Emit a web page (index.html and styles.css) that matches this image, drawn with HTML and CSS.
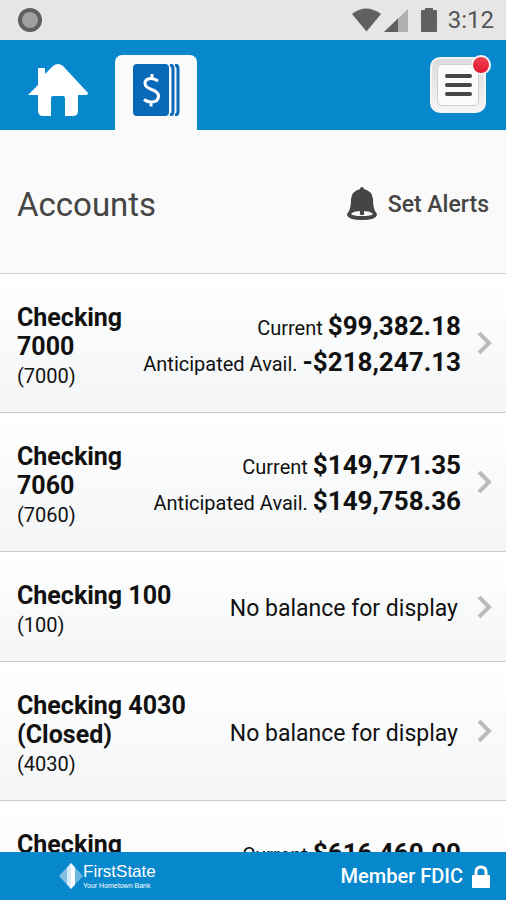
FILE: index.html
```html
<!DOCTYPE html>
<html lang="en">
<head>
    <meta charset="UTF-8">
    <meta name="viewport" content="width=device-width, initial-scale=1.0">
    <title>Accounts</title>
    <link rel="stylesheet" href="styles.css">
</head>
<body>
    <div class="status-bar">
        <span class="recorder"></span>
        <div class="status-icons">
            <svg width="30" height="24" viewBox="0 0 30 24"><path d="M0 6Q14 -5 29 6L14.500 23.500Z" fill="#606060"/></svg>
            <svg width="24" height="24" viewBox="0 0 24 24"><path d="M0 24L24 1V24Z" fill="#b0b0b0"/><path d="M0 24L14 10.500V24Z" fill="#606060"/></svg>
            <svg class="battery" width="16" height="24" viewBox="0 0 16 24"><path d="M4 0H12V2H15Q16 2 16 3V23Q16 24 15 24H1Q0 24 0 23V3Q0 2 1 2H4Z" fill="#606060"/></svg>
            <span class="clock">3:12</span>
        </div>
    </div>

    <header class="nav">
        <a href="#" class="home" aria-label="Home">
            <svg width="60" height="54" viewBox="0 0 60 54"><path d="M0 31L10 21V5Q10 4 11 4H16Q17 4 17 5V10L25 2Q30 -2 35 2L60 29Q60 31 58 31H50V47Q50 52 45 52H37V34Q37 32 35 32H25Q23 32 23 34V52H15Q10 52 10 46V31Z" fill="#fff"/></svg>
        </a>
        <a href="#" class="tab" aria-label="Accounts">
            <svg width="48" height="52" viewBox="0 0 48 52">
                <rect x="1" y="0" width="36" height="52" rx="4" fill="#0869b9"/>
                <path d="M38 1Q41 1 41 5V47Q41 51 38 51M43 1Q46 1 46 5V47Q46 51 43 51" fill="none" stroke="#0869b9" stroke-width="3"/>
                <path d="M26 17Q22.500 14.500 19 14.500Q13 14.500 13 19.500Q13 23 19.500 25.500Q26.500 28 26.500 32Q26.500 38 19 38Q15 38 12 35.500M20 10V15M19 38V42.500" fill="none" stroke="#fff" stroke-width="3"/>
            </svg>
        </a>
        <button class="menu-button" aria-label="Menu">
            <span class="menu-face"><span></span><span></span><span></span></span>
            <span class="badge"></span>
        </button>
    </header>

    <main>
        <div class="title-bar">
            <h1>Accounts</h1>
            <a href="#" class="alerts">
                <svg width="30" height="34" viewBox="0 0 30 34"><path d="M15 0Q17 0 17 2Q25 4 26 12Q26 20 28 24Q30 26 30 28Q29 33 15 33Q1 33 0 28Q0 26 2 24Q4 20 4 12Q5 4 13 2Q13 0 15 0Z" fill="#454545"/><path d="M4 27Q6 24 15 24Q24 24 26 27Q24 29 15 29Q6 29 4 27Z" fill="#fafafa"/><path d="M13 23H17V26Q18 28 15 28Q12 28 13 26Z" fill="#454545"/></svg>
                Set Alerts
            </a>
        </div>

        <ul class="accounts">
            <li><a href="#" class="account">
                <div class="info"><div class="name">Checking 7000</div><div class="number">(7000)</div></div>
                <div class="balances">
                    <div>Current <b>$99,382.18</b></div>
                    <div>Anticipated Avail. <b>-$218,247.13</b></div>
                </div>
                <svg class="chevron" width="15" height="22" viewBox="0 0 15 22"><path d="M2 1L12 11L2 21"/></svg>
            </a></li>
            <li><a href="#" class="account">
                <div class="info"><div class="name">Checking 7060</div><div class="number">(7060)</div></div>
                <div class="balances">
                    <div>Current <b>$149,771.35</b></div>
                    <div>Anticipated Avail. <b>$149,758.36</b></div>
                </div>
                <svg class="chevron" width="15" height="22" viewBox="0 0 15 22"><path d="M2 1L12 11L2 21"/></svg>
            </a></li>
            <li><a href="#" class="account">
                <div class="info"><div class="name">Checking 100</div><div class="number">(100)</div></div>
                <div class="no-balance">No balance for display</div>
                <svg class="chevron" width="15" height="22" viewBox="0 0 15 22"><path d="M2 1L12 11L2 21"/></svg>
            </a></li>
            <li><a href="#" class="account">
                <div class="info"><div class="name">Checking 4030 (Closed)</div><div class="number">(4030)</div></div>
                <div class="no-balance">No balance for display</div>
                <svg class="chevron" width="15" height="22" viewBox="0 0 15 22"><path d="M2 1L12 11L2 21"/></svg>
            </a></li>
            <li><a href="#" class="account">
                <div class="info"><div class="name">Checking 7080</div><div class="number">(7080)</div></div>
                <div class="balances">
                    <div>Current <b>$616,460.00</b></div>
                    <div>Anticipated Avail. <b>$616,460.00</b></div>
                </div>
                <svg class="chevron" width="15" height="22" viewBox="0 0 15 22"><path d="M2 1L12 11L2 21"/></svg>
            </a></li>
        </ul>
    </main>

    <footer>
        <div class="logo">
            <svg width="24" height="26" viewBox="0 0 24 26"><path d="M12 0V26L0 13Z" fill="#84c0e5"/><path d="M12 0V26L8 21.500V4.500Z" fill="#d4eaf7"/><path d="M12 0L24 13L12 26Z" fill="#6cb5df"/><path d="M12 0L16 4.500V21.500L12 26Z" fill="#fff"/></svg>
            <div class="logo-text">
                <div class="bank">FirstState</div>
                <div class="slogan">Your Hometown Bank</div>
            </div>
        </div>
        <div class="fdic">
            Member FDIC
            <svg width="18" height="23" viewBox="0 0 18 23"><path d="M4 12V7Q4 2 9 2Q14 2 14 7V12" fill="none" stroke="#fff" stroke-width="3"/><rect x="0" y="10" width="18" height="13" rx="1" fill="#fff"/></svg>
        </div>
    </footer>
</body>
</html>
```
FILE: styles.css
```css
* {
    box-sizing: border-box;
}
body {
    display: flex;
    flex-direction: column;
    height: 100vh;
    margin: 0;
    background-color: #fafafa;
    font-family: Roboto, Arial, sans-serif;
    color: #111;
}
a {
    color: inherit;
    text-decoration: none;
}
svg {
    display: block;
    flex-shrink: 0;
}
.status-bar {
    display: flex;
    flex-shrink: 0;
    align-items: center;
    justify-content: space-between;
    height: 40px;
    padding: 0 12px 0 18px;
    background-color: #e6e6e6;
}
.recorder {
    width: 24px;
    height: 24px;
    border: 4px solid #606060;
    border-radius: 50%;
    background-color: #a0a0a0;
}
.status-icons {
    display: flex;
    align-items: center;
    gap: 2px;
}
.battery {
    margin: 0 9px 0 11px;
}
.clock {
    font-size: 24px;
    line-height: 24px;
    color: #555;
}
.nav {
    display: flex;
    flex-shrink: 0;
    align-items: flex-end;
    height: 90px;
    padding: 0 20px 0 28px;
    background-color: #0888cc;
}
.home {
    margin-bottom: 12px;
}
.tab {
    display: flex;
    justify-content: center;
    width: 82px;
    height: 75px;
    margin-left: 27px;
    padding-top: 9px;
    border-radius: 7px 7px 0 0;
    background-color: #fafafa;
}
.menu-button {
    position: relative;
    width: 56px;
    height: 56px;
    margin: 0 0 17px auto;
    padding: 5px;
    border: 2px solid #f5f5f5;
    border-radius: 10px;
    background: linear-gradient(#dcdcdc, #f4f4f4);
    cursor: pointer;
}
.menu-face {
    display: flex;
    flex-direction: column;
    align-items: center;
    justify-content: center;
    gap: 5px;
    height: 100%;
    border: 1px solid #cfcfcf;
    border-radius: 5px;
    background-color: #fafafa;
}
.menu-face span {
    width: 27px;
    height: 4px;
    border-radius: 2px;
    background-color: #454545;
}
.badge {
    position: absolute;
    top: -4px;
    right: -7px;
    width: 20px;
    height: 20px;
    border: 2px solid #f4f4f4;
    border-radius: 50%;
    background: linear-gradient(#f04050, #e01830);
}
main {
    flex: 1;
    min-height: 0;
    overflow-y: auto;
    scrollbar-width: none;
}
.title-bar {
    display: flex;
    align-items: center;
    justify-content: space-between;
    height: 144px;
    padding: 5px 17px 0;
    border-bottom: 1px solid #ccc;
    color: #454545;
}
h1 {
    margin: 0;
    font-size: 33px;
    font-weight: 400;
}
.alerts {
    display: flex;
    align-items: center;
    gap: 11px;
    font-size: 23px;
    font-weight: 500;
}
.accounts {
    margin: 0;
    padding: 0;
    list-style: none;
}
.account {
    display: flex;
    align-items: center;
    padding: 0 14px 0 17px;
    border-bottom: 1px solid #c8cbcd;
    background: linear-gradient(#fff, #f3f5f6);
}
.info {
    flex: 1;
    padding: 29px 0 21px;
}
.name {
    font-size: 25px;
    font-weight: 700;
    line-height: 29px;
}
.number {
    font-size: 20px;
    line-height: 30px;
}
.balances {
    margin-right: 16px;
    padding-top: 6px;
    font-size: 20px;
    line-height: 36px;
    text-align: right;
    white-space: nowrap;
}
.balances b {
    font-size: 26px;
    line-height: 26px;
}
.no-balance {
    margin-right: 19px;
    padding-top: 4px;
    font-size: 23px;
}
.chevron path {
    fill: none;
    stroke: #bbb;
    stroke-width: 4;
}
footer {
    display: flex;
    flex-shrink: 0;
    align-items: center;
    justify-content: space-between;
    height: 48px;
    padding: 0 16px 0 59px;
    background-color: #0888cc;
    color: #fff;
}
.logo {
    display: flex;
    align-items: center;
}
.bank {
    font-family: "Liberation Sans", Arial, sans-serif;
    font-size: 17px;
    line-height: 18px;
}
.slogan {
    font-family: "Liberation Sans", Arial, sans-serif;
    font-size: 7px;
    line-height: 9px;
}
.fdic {
    display: flex;
    align-items: center;
    gap: 9px;
    font-size: 20px;
    font-weight: 500;
}
```
